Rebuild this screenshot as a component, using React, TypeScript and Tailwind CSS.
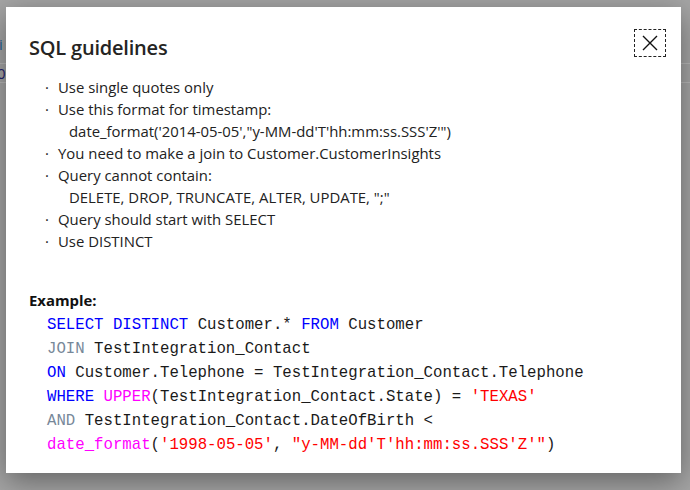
import React from 'react';

const rules: { text: string; sub?: string }[] = [
  { text: 'Use single quotes only' },
  { text: 'Use this format for timestamp:', sub: `date_format('2014-05-05',"y-MM-dd'T'hh:mm:ss.SSS'Z'")` },
  { text: 'You need to make a join to Customer.CustomerInsights' },
  { text: 'Query cannot contain:', sub: 'DELETE, DROP, TRUNCATE, ALTER, UPDATE, ";"' },
  { text: 'Query should start with SELECT' },
  { text: 'Use DISTINCT' },
];

const kw = 'text-[#0000ff]';
const gray = 'text-[#778899]';
const fn = 'text-[#ff00ff]';
const str = 'text-[#ff0000]';

function CloseIcon() {
  return (
    <svg width="18" height="18" viewBox="0 0 18 18" fill="none" stroke="#111" strokeWidth="1.4">
      <path d="M2 2 L16 16 M16 2 L2 16" />
    </svg>
  );
}

export default function App() {
  return (
    <div className="relative w-[690px] h-[490px] overflow-hidden bg-[#a5a5a5] font-['Open_Sans',sans-serif]">
      {/* page behind the overlay */}
      <div className="flex flex-col pt-[34px]">
        <div className="h-[29px] -ml-[1px] text-[15px] leading-[20px] text-[#1d5d95]">i</div>
        <div className="border-t border-[#b8b8b8] h-[19px] -ml-[3px] text-[15px] leading-[18px] text-[#22226e]">0</div>
        <div className="border-t border-[#b8b8b8]" />
      </div>

      {/* dialog */}
      <div className="absolute left-[6px] top-[7px] w-[675px] h-[466px] bg-white shadow-[0_8px_28px_rgba(0,0,0,0.4)]">
        <div className="flex items-start justify-between pl-[23px] pr-[15px] pt-[22px]">
          <h1 className="text-[20px] font-semibold text-[#252423] leading-[38px] tracking-[-0.2px]">SQL guidelines</h1>
          <button className="flex h-[28px] w-[32px] items-center justify-center border border-dashed border-[#222]">
            <CloseIcon />
          </button>
        </div>

        <ul className="mt-[9px] pl-[39px] text-[14.9px] leading-[22px] text-[#222]">
          {rules.map((r) => (
            <li key={r.text}>
              <div className="flex">
                <span className="w-[13px]">·</span>
                <span>{r.text}</span>
              </div>
              {r.sub && <div className="pl-[24px]">{r.sub}</div>}
            </li>
          ))}
        </ul>

        <div className="mt-[37px] pl-[23px] text-[14.9px] font-bold leading-[22px] text-[#111]">Example:</div>
        <pre className="pl-[41px] pt-[2px] font-['Liberation_Mono',monospace] text-[15.7px] leading-[24px] text-[#1a1a1a]">
          <div><span className={kw}>SELECT DISTINCT</span> Customer.* <span className={kw}>FROM</span> Customer</div>
          <div><span className={gray}>JOIN</span> TestIntegration_Contact</div>
          <div><span className={kw}>ON</span> Customer.Telephone = TestIntegration_Contact.Telephone</div>
          <div>
            <span className={kw}>WHERE</span> <span className={fn}>UPPER</span>(TestIntegration_Contact.State) ={' '}
            <span className={str}>'TEXAS'</span>
          </div>
          <div><span className={gray}>AND</span> TestIntegration_Contact.DateOfBirth &lt;</div>
          <div>
            <span className={fn}>date_format</span>(<span className={str}>'1998-05-05'</span>,{' '}
            <span className={str}>"y-MM-dd'T'hh:mm:ss.SSS'Z'"</span>)
          </div>
        </pre>
      </div>
    </div>
  );
}
